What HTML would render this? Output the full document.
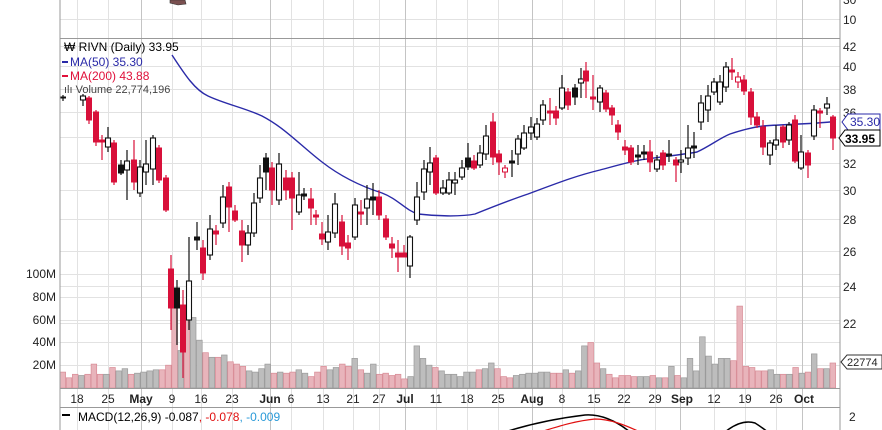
<!DOCTYPE html>
<html><head><meta charset="utf-8"><style>
html,body{margin:0;padding:0;background:#fff;width:882px;height:430px;overflow:hidden}
svg{display:block;font-family:"Liberation Sans",Arial,sans-serif}
.p{fill:#e8b4bb;stroke:#d88a95;stroke-width:.7}
.g{fill:#bdbdbd;stroke:#9a9a9a;stroke-width:.7}
.u{fill:#fff;stroke:#111;stroke-width:1.1}
.d{fill:#d8103a;stroke:#d8103a;stroke-width:1}
.b{fill:#111;stroke:#111;stroke-width:1}
.wu{stroke:#111;stroke-width:1.2}
.wd{stroke:#d8103a;stroke-width:1.2}
</style></head><body>
<svg width="882" height="430" xmlns="http://www.w3.org/2000/svg">
<rect width="882" height="430" fill="#fff"/>
<g stroke="#e2e2e2">
<path d="M60 19.5H840M60 46.5H840M60 66.5H840M60 89.5H840M60 112.5H840M60 137.5H840M60 163.5H840M60 190.5H840M60 219.5H840M60 251.5H840M60 286.5H840M60 323.5H840M60 274.5H840M60 297.5H840M60 320.5H840M60 342.5H840M60 365.5H840"/>
<path d="M77.5 0V430M108.5 0V430M172.5 0V430M201.5 0V430M232.5 0V430M291.5 0V430M323.5 0V430M353.5 0V430M379.5 0V430M436.5 0V430M467.5 0V430M498.5 0V430M562.5 0V430M594.5 0V430M624.5 0V430M655.5 0V430M714.5 0V430M745.5 0V430M776.5 0V430"/>
</g>
<path d="M141.5 0V430M270.5 0V430M405.5 0V430M532.5 0V430M680.5 0V430M802.5 0V430" stroke="#c4c4c4"/>
<g>
<rect class="p" x="60" y="372.1" width="5.6" height="15.9"/><rect class="p" x="66.2" y="377.8" width="5.6" height="10.2"/><rect class="p" x="72.4" y="374.3" width="5.6" height="13.7"/><rect class="g" x="78.6" y="375.5" width="5.6" height="12.5"/><rect class="p" x="84.8" y="374.3" width="5.6" height="13.7"/><rect class="p" x="91.1" y="364.1" width="5.6" height="23.9"/><rect class="p" x="97.3" y="374.3" width="5.6" height="13.7"/><rect class="g" x="103.5" y="374.3" width="5.6" height="13.7"/><rect class="p" x="109.7" y="367.5" width="5.6" height="20.5"/><rect class="g" x="115.9" y="370.9" width="5.6" height="17.1"/>
<rect class="g" x="122.1" y="368.7" width="5.6" height="19.3"/><rect class="p" x="128.3" y="374.3" width="5.6" height="13.7"/><rect class="g" x="134.5" y="373.2" width="5.6" height="14.8"/><rect class="g" x="140.7" y="372.1" width="5.6" height="15.9"/><rect class="g" x="146.9" y="370.9" width="5.6" height="17.1"/><rect class="g" x="153.2" y="369.8" width="5.6" height="18.2"/><rect class="p" x="159.4" y="369.8" width="5.6" height="18.2"/><rect class="p" x="165.6" y="365.2" width="5.6" height="22.8"/><rect class="p" x="171.8" y="294.7" width="5.6" height="93.3"/><rect class="g" x="178" y="350.5" width="5.6" height="37.5"/>
<rect class="p" x="184.2" y="319.7" width="5.6" height="68.3"/><rect class="g" x="190.4" y="317.5" width="5.6" height="70.5"/><rect class="g" x="196.6" y="340.2" width="5.6" height="47.8"/><rect class="p" x="202.8" y="352.7" width="5.6" height="35.3"/><rect class="g" x="209" y="357.3" width="5.6" height="30.7"/><rect class="p" x="215.3" y="357.3" width="5.6" height="30.7"/><rect class="g" x="221.5" y="355" width="5.6" height="33"/><rect class="p" x="227.7" y="361.8" width="5.6" height="26.2"/><rect class="p" x="233.9" y="364.1" width="5.6" height="23.9"/><rect class="p" x="240.1" y="366.4" width="5.6" height="21.6"/>
<rect class="g" x="246.3" y="370.9" width="5.6" height="17.1"/><rect class="g" x="252.5" y="372.1" width="5.6" height="15.9"/><rect class="g" x="258.7" y="368.7" width="5.6" height="19.3"/><rect class="g" x="264.9" y="364.1" width="5.6" height="23.9"/><rect class="p" x="271.1" y="373.2" width="5.6" height="14.8"/><rect class="g" x="277.4" y="372.1" width="5.6" height="15.9"/><rect class="p" x="283.6" y="373.2" width="5.6" height="14.8"/><rect class="p" x="289.8" y="372.1" width="5.6" height="15.9"/><rect class="g" x="296" y="369.8" width="5.6" height="18.2"/><rect class="g" x="302.2" y="373.2" width="5.6" height="14.8"/>
<rect class="p" x="308.4" y="376.6" width="5.6" height="11.4"/><rect class="p" x="314.6" y="372.1" width="5.6" height="15.9"/><rect class="p" x="320.8" y="366.4" width="5.6" height="21.6"/><rect class="g" x="327" y="369.8" width="5.6" height="18.2"/><rect class="g" x="333.2" y="367.5" width="5.6" height="20.5"/><rect class="p" x="339.5" y="364.1" width="5.6" height="23.9"/><rect class="p" x="345.7" y="366.4" width="5.6" height="21.6"/><rect class="g" x="351.9" y="358.4" width="5.6" height="29.6"/><rect class="p" x="358.1" y="369.8" width="5.6" height="18.2"/><rect class="g" x="364.3" y="373.2" width="5.6" height="14.8"/>
<rect class="g" x="370.5" y="364.1" width="5.6" height="23.9"/><rect class="p" x="376.7" y="374.3" width="5.6" height="13.7"/><rect class="p" x="382.9" y="373.2" width="5.6" height="14.8"/><rect class="p" x="389.1" y="375.5" width="5.6" height="12.5"/><rect class="p" x="395.3" y="374.3" width="5.6" height="13.7"/><rect class="p" x="401.6" y="378.9" width="5.6" height="9.1"/><rect class="g" x="407.8" y="376.6" width="5.6" height="11.4"/><rect class="g" x="414" y="345.9" width="5.6" height="42.1"/><rect class="g" x="420.2" y="358.4" width="5.6" height="29.6"/><rect class="g" x="426.4" y="365.2" width="5.6" height="22.8"/>
<rect class="p" x="432.6" y="367.5" width="5.6" height="20.5"/><rect class="g" x="438.8" y="370.9" width="5.6" height="17.1"/><rect class="g" x="445" y="374.3" width="5.6" height="13.7"/>
<rect class="g" x="451.2" y="374.3" width="5.6" height="13.7"/><rect class="g" x="457.4" y="376.6" width="5.6" height="11.4"/><rect class="g" x="463.7" y="372.1" width="5.6" height="15.9"/><rect class="g" x="469.9" y="372.1" width="5.6" height="15.9"/><rect class="p" x="476.1" y="369.8" width="5.6" height="18.2"/><rect class="g" x="482.3" y="368.7" width="5.6" height="19.3"/><rect class="g" x="488.5" y="363" width="5.6" height="25"/><rect class="p" x="494.7" y="368.7" width="5.6" height="19.3"/><rect class="p" x="500.9" y="376.6" width="5.6" height="11.4"/><rect class="p" x="507.1" y="377.8" width="5.6" height="10.2"/>
<rect class="g" x="513.3" y="375.5" width="5.6" height="12.5"/><rect class="g" x="519.5" y="374.3" width="5.6" height="13.7"/><rect class="g" x="525.8" y="373.2" width="5.6" height="14.8"/><rect class="g" x="532" y="373.2" width="5.6" height="14.8"/><rect class="g" x="538.2" y="372.1" width="5.6" height="15.9"/><rect class="g" x="544.4" y="372.1" width="5.6" height="15.9"/><rect class="p" x="550.6" y="373.2" width="5.6" height="14.8"/><rect class="p" x="556.8" y="373.2" width="5.6" height="14.8"/><rect class="g" x="563" y="369.8" width="5.6" height="18.2"/><rect class="p" x="569.2" y="373.2" width="5.6" height="14.8"/>
<rect class="g" x="575.4" y="370.9" width="5.6" height="17.1"/><rect class="g" x="581.6" y="345.9" width="5.6" height="42.1"/><rect class="p" x="587.9" y="342.5" width="5.6" height="45.5"/><rect class="p" x="594.1" y="363" width="5.6" height="25"/><rect class="g" x="600.3" y="368.7" width="5.6" height="19.3"/><rect class="p" x="606.5" y="374.3" width="5.6" height="13.7"/><rect class="p" x="612.7" y="377.8" width="5.6" height="10.2"/><rect class="p" x="618.9" y="375.5" width="5.6" height="12.5"/><rect class="p" x="625.1" y="375.5" width="5.6" height="12.5"/><rect class="p" x="631.3" y="376.6" width="5.6" height="11.4"/>
<rect class="g" x="637.5" y="376.6" width="5.6" height="11.4"/><rect class="g" x="643.7" y="376.6" width="5.6" height="11.4"/><rect class="p" x="650" y="375.5" width="5.6" height="12.5"/><rect class="g" x="656.2" y="377.8" width="5.6" height="10.2"/><rect class="p" x="662.4" y="377.8" width="5.6" height="10.2"/><rect class="g" x="668.6" y="366.4" width="5.6" height="21.6"/><rect class="p" x="674.8" y="375.5" width="5.6" height="12.5"/><rect class="g" x="681" y="377.8" width="5.6" height="10.2"/><rect class="g" x="687.2" y="358.4" width="5.6" height="29.6"/><rect class="g" x="693.4" y="370.9" width="5.6" height="17.1"/>
<rect class="g" x="699.6" y="336.8" width="5.6" height="51.2"/><rect class="g" x="705.8" y="356.1" width="5.6" height="31.9"/><rect class="g" x="712.1" y="364.1" width="5.6" height="23.9"/><rect class="g" x="718.3" y="358.4" width="5.6" height="29.6"/><rect class="g" x="724.5" y="358.4" width="5.6" height="29.6"/><rect class="p" x="730.7" y="360.7" width="5.6" height="27.3"/><rect class="p" x="736.9" y="306.1" width="5.6" height="81.9"/><rect class="p" x="743.1" y="366.4" width="5.6" height="21.6"/><rect class="p" x="749.3" y="367.5" width="5.6" height="20.5"/><rect class="p" x="755.5" y="370.9" width="5.6" height="17.1"/>
<rect class="p" x="761.7" y="370.9" width="5.6" height="17.1"/><rect class="g" x="767.9" y="369.8" width="5.6" height="18.2"/><rect class="g" x="774.2" y="374.3" width="5.6" height="13.7"/><rect class="p" x="780.4" y="374.3" width="5.6" height="13.7"/><rect class="g" x="786.6" y="374.3" width="5.6" height="13.7"/><rect class="p" x="792.8" y="367.5" width="5.6" height="20.5"/><rect class="g" x="799" y="373.2" width="5.6" height="14.8"/><rect class="p" x="805.2" y="372.1" width="5.6" height="15.9"/><rect class="g" x="811.4" y="353.9" width="5.6" height="34.1"/><rect class="p" x="817.6" y="368.7" width="5.6" height="19.3"/>
<rect class="g" x="823.8" y="368.7" width="5.6" height="19.3"/><rect class="p" x="830" y="363" width="5.6" height="25"/>
</g>
<path d="M172,55 C185,75 195,90 208,96 C225,104 245,108 262,116 C285,128 300,145 322,162 C340,176 360,186 382,193 C398,199 405,210 418,214 C435,216 460,217 475,214 C495,206 510,200 528,194 C555,184 575,176 600,170 C615,166 625,163 640,160 C660,157 680,155 697,152 C710,146 720,138 730,134 C745,129 755,127 763,126 C790,124 810,124 830,122 L836,119" fill="none" stroke="#2a2aa8" stroke-width="1.4"/>
<path class="wu" d="M63 95V101M83 94V106M108 127V152M121 160V175M127 150V200M140 160V197M146 140V185M153 135V185M177 280V345M189 237V330M197 222V250M210 215V260M223 185V228M248 225V255M254 193V237M260 165V203M266 153V190M279 153V205M299 172V215M304 188V200M328 215V250M335 193V238M355 198V240M367 185V225M373 183V215M410 235V278M417 182V225M424 160V200M430 147V185M443 180V195M449 172V195M455 172V195M462 160V180M468 143V170M480 145V168M486 125V160M512 150V177M518 135V165M524 125V150M531 117V140M537 118V140M543 100V125M562 75V110M575 84V105M581 68V98M600 85V112M638 145V165M644 145V160M657 155V172M669 140V162M681 150V173M688 125V165M694 132V158M701 95V130M708 85V122M714 78V95M720 75V105M726 62V92M770 140V165M776 125V150M789 122V145M801 135V170M814 105V140M827 97V115"/>
<path class="wd" d="M89 96V124M96 110V146M102 135V160M114 140V185M134 140V190M159 145V183M166 175V212M171 255V330M183 290V378M203 240V280M216 225V245M229 182V232M235 205V222M242 220V262M272 162V205M286 170V200M292 172V230M311 188V225M316 210V225M322 222V245M342 215V255M348 235V260M361 200V225M379 190V220M386 215V240M392 237V258M398 240V272M404 245V255M436 155V195M474 155V170M493 113V165M499 150V175M505 165V178M550 98V125M556 106V125M568 88V110M586 62V98M593 75V110M606 90V112M612 105V125M618 120V140M625 140V155M631 145V165M650 140V172M663 150V170M676 157V182M732 58V80M738 72V88M744 75V95M751 88V125M757 112V128M763 120V155M783 125V148M795 115V163M808 150V178M820 108V128M833 115V150"/>
<g>
<rect class="b" x="60.5" y="97" width="5" height="1"/><rect class="u" x="80.5" y="96" width="5" height="4"/>
<rect class="d" x="86.5" y="98" width="5" height="22"/><rect class="d" x="93.5" y="112" width="5" height="30"/><rect class="d" x="99.5" y="140" width="5" height="2"/><rect class="u" x="105.5" y="138" width="5" height="9"/><rect class="d" x="111.5" y="143" width="5" height="39"/><rect class="b" x="118.5" y="165" width="5" height="8"/><rect class="u" x="124.5" y="161" width="5" height="9"/><rect class="d" x="131.5" y="160" width="5" height="22"/><rect class="u" x="137.5" y="167" width="5" height="26"/><rect class="u" x="143.5" y="164" width="5" height="8"/><rect class="u" x="150.5" y="138" width="5" height="31"/><rect class="d" x="156.5" y="148" width="5" height="32"/><rect class="d" x="163.5" y="178" width="5" height="32"/>
<rect class="d" x="168.5" y="269" width="5" height="39"/><rect class="b" x="174.5" y="288" width="5" height="20"/><rect class="d" x="180.5" y="305" width="5" height="47"/><rect class="u" x="186.5" y="281" width="5" height="39"/><rect class="b" x="194.5" y="237" width="5" height="3"/><rect class="d" x="200.5" y="248" width="5" height="25"/><rect class="u" x="207.5" y="229" width="5" height="26"/><rect class="d" x="213.5" y="231" width="5" height="3"/><rect class="u" x="220.5" y="197" width="5" height="26"/><rect class="d" x="226.5" y="187" width="5" height="20"/><rect class="d" x="232.5" y="211" width="5" height="9"/><rect class="d" x="239.5" y="231" width="5" height="14"/><rect class="u" x="245.5" y="233" width="5" height="12"/><rect class="u" x="251.5" y="203" width="5" height="30"/><rect class="u" x="257.5" y="178" width="5" height="20"/><rect class="b" x="263.5" y="158" width="5" height="14"/><rect class="d" x="269.5" y="168" width="5" height="22"/><rect class="u" x="276.5" y="164" width="5" height="36"/><rect class="d" x="283.5" y="178" width="5" height="12"/><rect class="d" x="289.5" y="178" width="5" height="20"/><rect class="u" x="296.5" y="195" width="5" height="17"/><rect class="b" x="301.5" y="194" width="5" height="2"/><rect class="d" x="308.5" y="199" width="5" height="9"/><rect class="d" x="313.5" y="215" width="5" height="2"/><rect class="d" x="319.5" y="234" width="5" height="5"/><rect class="u" x="325.5" y="232" width="5" height="10"/><rect class="u" x="332.5" y="204" width="5" height="29"/><rect class="d" x="339.5" y="222" width="5" height="24"/><rect class="d" x="345.5" y="243" width="5" height="5"/><rect class="u" x="352.5" y="205" width="5" height="32"/><rect class="d" x="358.5" y="212" width="5" height="2"/><rect class="u" x="364.5" y="199" width="5" height="9"/><rect class="b" x="370.5" y="197" width="5" height="3"/><rect class="d" x="376.5" y="197" width="5" height="18"/><rect class="d" x="383.5" y="219" width="5" height="18"/><rect class="d" x="389.5" y="244" width="5" height="4"/><rect class="d" x="395.5" y="253" width="5" height="4"/><rect class="d" x="401.5" y="253" width="5" height="4"/><rect class="u" x="407.5" y="237" width="5" height="29"/><rect class="u" x="414.5" y="197" width="5" height="23"/><rect class="u" x="421.5" y="169" width="5" height="23"/>
<rect class="u" x="427.5" y="163" width="5" height="9"/><rect class="d" x="433.5" y="158" width="5" height="35"/><rect class="u" x="440.5" y="188" width="5" height="5"/><rect class="u" x="446.5" y="180" width="5" height="13"/><rect class="u" x="452.5" y="180" width="5" height="3"/><rect class="u" x="459.5" y="168" width="5" height="9"/><rect class="b" x="465.5" y="158" width="5" height="9"/><rect class="d" x="471.5" y="161" width="5" height="7"/><rect class="u" x="477.5" y="153" width="5" height="12"/><rect class="u" x="483.5" y="136" width="5" height="18"/><rect class="d" x="490.5" y="122" width="5" height="35"/><rect class="d" x="496.5" y="154" width="5" height="8"/><rect x="502.5" y="168" width="5" height="4" fill="#fff" stroke="#d8103a"/><rect class="b" x="509.5" y="161" width="5" height="2"/><rect class="u" x="515.5" y="139" width="5" height="15"/><rect class="u" x="521.5" y="133" width="5" height="15"/><rect class="u" x="528.5" y="127" width="5" height="6"/><rect class="u" x="534.5" y="124" width="5" height="13"/><rect class="u" x="540.5" y="105" width="5" height="15"/><rect class="d" x="547.5" y="111" width="5" height="2"/><rect class="d" x="553.5" y="111" width="5" height="7"/><rect class="u" x="559.5" y="88" width="5" height="20"/><rect class="d" x="565.5" y="92" width="5" height="13"/><rect class="b" x="572.5" y="88" width="5" height="9"/><rect class="u" x="578.5" y="79" width="5" height="4"/><rect class="d" x="583.5" y="71" width="5" height="10"/><rect class="d" x="590.5" y="97" width="5" height="2"/><rect class="u" x="597.5" y="88" width="5" height="14"/><rect class="d" x="603.5" y="93" width="5" height="16"/><rect class="d" x="609.5" y="108" width="5" height="7"/><rect class="d" x="615.5" y="125" width="5" height="7"/><rect class="d" x="622.5" y="147" width="5" height="3"/><rect class="d" x="628.5" y="148" width="5" height="14"/>
<rect class="b" x="635.5" y="155" width="5" height="2"/><rect class="b" x="641.5" y="152" width="5" height="2"/><rect class="d" x="647.5" y="152" width="5" height="10"/><rect class="u" x="654.5" y="160" width="5" height="9"/><rect class="d" x="660.5" y="153" width="5" height="12"/><rect class="b" x="666.5" y="154" width="5" height="2"/><rect class="d" x="673.5" y="160" width="5" height="5"/><rect class="u" x="678.5" y="160" width="5" height="2"/><rect class="u" x="685.5" y="148" width="5" height="10"/><rect class="b" x="691.5" y="146" width="5" height="2"/><rect class="u" x="698.5" y="103" width="5" height="19"/><rect class="u" x="705.5" y="96" width="5" height="14"/><rect class="u" x="711.5" y="82" width="5" height="10"/><rect class="u" x="717.5" y="82" width="5" height="20"/><rect class="u" x="723.5" y="67" width="5" height="20"/><rect class="d" x="729.5" y="70" width="5" height="2"/><rect x="735.5" y="77" width="5" height="5" fill="#fff" stroke="#d8103a"/><rect class="d" x="741.5" y="80" width="5" height="11"/><rect class="d" x="748.5" y="92" width="5" height="25"/><rect class="d" x="754.5" y="117" width="5" height="8"/><rect class="d" x="760.5" y="127" width="5" height="20"/><rect class="u" x="767.5" y="143" width="5" height="12"/><rect class="u" x="773.5" y="140" width="5" height="5"/><rect class="d" x="780.5" y="127" width="5" height="15"/><rect class="u" x="786.5" y="125" width="5" height="15"/><rect class="d" x="792.5" y="120" width="5" height="41"/><rect class="u" x="798.5" y="152" width="5" height="16"/><rect class="d" x="805.5" y="153" width="5" height="12"/><rect class="u" x="811.5" y="110" width="5" height="26"/><rect class="d" x="817.5" y="111" width="5" height="2"/><rect class="u" x="824.5" y="104" width="5" height="4"/><rect class="d" x="830.5" y="117" width="5" height="21"/>
</g>
<path d="M505,432 C530,424 560,418 585,415 C600,414 615,420 630,432 M725,432 C735,424 745,420 755,423 C760,426 765,430 768,432" fill="none" stroke="#000" stroke-width="1.5"/>
<path d="M540,432 C560,426 575,421 595,419 C610,419 625,425 640,432" fill="none" stroke="#e01010" stroke-width="1.2"/>
<line x1="60" y1="0" x2="60" y2="430" stroke="#999"/>
<line x1="840" y1="0" x2="840" y2="430" stroke="#999"/>
<line x1="60" y1="38.5" x2="840" y2="38.5" stroke="#999"/>
<line x1="60" y1="388.5" x2="840" y2="388.5" stroke="#999"/>
<line x1="60" y1="407.5" x2="840" y2="407.5" stroke="#999"/>
<path d="M170,0 L185,0 186,4 178,5 170,3Z" fill="#7a5050" stroke="#333" stroke-width="0.6"/>
<g font-size="12" fill="#222">
<text x="843" y="4">30</text>
<text x="843" y="24">10</text>
<text x="843" y="51">42</text>
<text x="843" y="71">40</text>
<text x="843" y="94">38</text>
<text x="843" y="117">36</text>
<text x="843" y="168">32</text>
<text x="843" y="195">30</text>
<text x="843" y="224">28</text>
<text x="843" y="256">26</text>
<text x="843" y="291">24</text>
<text x="843" y="328">22</text>
<text x="849" y="421">2</text>
</g>
<path d="M842,122 L848,114 880,114 880,130 848,130Z" fill="#fff" stroke="#2a2aa8"/>
<text x="850" y="126" font-size="12" fill="#2a2aa8">35.30</text>
<path d="M839,138 L845,130 880,130 880,146 845,146Z" fill="#fff" stroke="#000"/>
<text x="845" y="143" font-size="12" font-weight="bold" fill="#000">33.95</text>
<path d="M841,362 L847,355 882,355 882,369 847,369Z" fill="#fff" stroke="#333"/>
<text x="847" y="366" font-size="11" fill="#222">22774</text>
<g font-size="12" fill="#222" text-anchor="end">
<text x="56" y="278">100M</text><text x="56" y="301">80M</text><text x="56" y="324">60M</text><text x="56" y="346">40M</text><text x="56" y="369">20M</text>
</g>
<g font-size="12" fill="#222" text-anchor="middle">
<text x="77" y="403">18</text><text x="108" y="403">25</text><text x="141" y="403" font-weight="bold">May</text><text x="172" y="403">9</text><text x="201" y="403">16</text><text x="232" y="403">23</text><text x="270" y="403" font-weight="bold">Jun</text><text x="291" y="403">6</text><text x="323" y="403">13</text><text x="353" y="403">21</text><text x="379" y="403">27</text><text x="405" y="403" font-weight="bold">Jul</text><text x="436" y="403">11</text><text x="467" y="403">18</text><text x="498" y="403">25</text><text x="532" y="403" font-weight="bold">Aug</text><text x="562" y="403">8</text><text x="594" y="403">15</text><text x="624" y="403">22</text><text x="655" y="403">29</text><text x="682" y="403" font-weight="bold">Sep</text><text x="714" y="403">12</text><text x="745" y="403">19</text><text x="776" y="403">26</text><text x="804" y="403" font-weight="bold">Oct</text>
</g>
<g font-size="12">
<text x="64" y="51" fill="#000">₩ RIVN (Daily) 33.95</text>
<rect x="62" y="61" width="6" height="2" fill="#2a2aa8"/><text x="70" y="66" fill="#2a2aa8">MA(50) 35.30</text>
<rect x="62" y="75" width="6" height="2" fill="#e0103a"/><text x="70" y="80" fill="#e0103a">MA(200) 43.88</text>
<text x="64" y="93" fill="#444" font-size="11">ılı Volume 22,774,196</text>
<rect x="62" y="414" width="8" height="2" fill="#000"/>
<text x="78" y="421" fill="#000">MACD(12,26,9) -0.087<tspan fill="#e01010">, -0.078</tspan><tspan fill="#2a9ad8">, -0.009</tspan></text>
</g>
</svg>
</body></html>
